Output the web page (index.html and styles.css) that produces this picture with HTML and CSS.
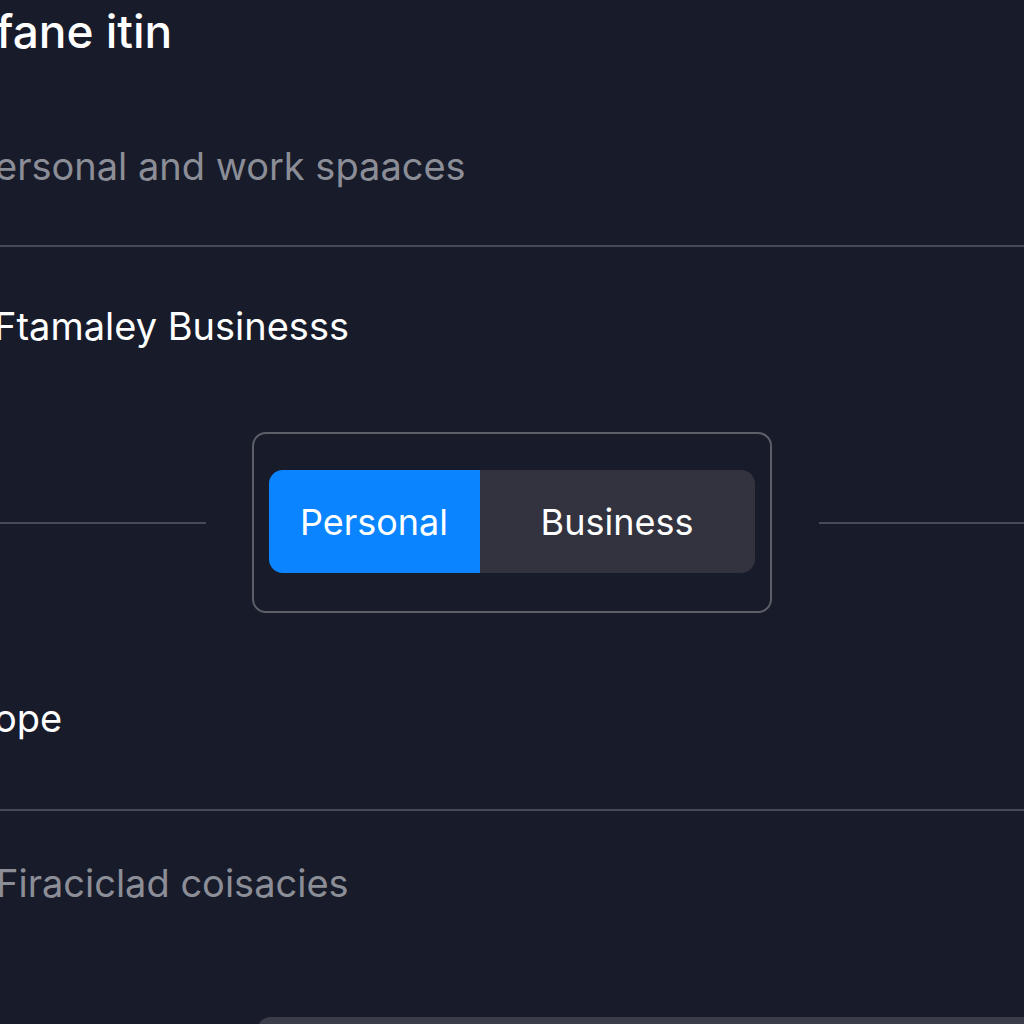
FILE: index.html
```html
<!DOCTYPE html>
<html lang="en">
<head>
    <meta charset="UTF-8">
    <meta name="viewport" content="width=device-width, initial-scale=1.0">
    <title>Spaces</title>
    <link rel="stylesheet" href="styles.css">
</head>
<body>
<div class="screen">
    <h1 class="title">fane itin</h1>
    <p class="subtitle">ersonal and work spaaces</p>

    <hr class="divider">

    <h2 class="row-label first">Ftamaley Businesss</h2>

    <!-- Space switcher -->
    <div class="switch-row">
        <span class="rule"></span>
        <div class="switch-box">
            <div class="segments">
                <button class="segment active">Personal</button>
                <button class="segment">Business</button>
            </div>
        </div>
        <span class="rule"></span>
    </div>

    <h2 class="row-label second">ope</h2>

    <hr class="divider lower">

    <p class="subtitle muted-bottom">Firaciclad coisacies</p>

    <div class="sheet"></div>
</div>
</body>
</html>
```

FILE: styles.css
```css
body {
    margin: 0;
    padding: 0;
    background: #171b2a;
    font-family: 'Inter', 'Noto Sans', sans-serif;
    color: #fff;
    overflow: hidden;
    height: 1024px;
}

.screen {
    display: flex;
    flex-direction: column;
    width: 1024px;
}

.title {
    margin: 8px 0 0 -4px;
    font-size: 46px;
    line-height: 46px;
    font-weight: 500;
}

.subtitle {
    margin: 93px 0 0 -5px;
    font-size: 38px;
    line-height: 38px;
    color: #8c8e97;
}

.divider {
    margin: 60px 0 0;
    border: none;
    height: 2px;
    background: #474b57;
}

.divider.lower {
    margin-top: 72px;
}

.row-label {
    margin: 60px 0 0 -6px;
    font-size: 38px;
    line-height: 38px;
    font-weight: 400;
}

.row-label.second {
    margin-top: 86px;
}

.muted-bottom {
    margin-top: 53px;
    margin-left: -4px;
}

.switch-row {
    display: flex;
    align-items: center;
    margin-top: 87px;
}

.rule {
    flex: 1;
    height: 2px;
    background: #474b57;
}

.switch-box {
    width: 486px;
    margin: 0 47px 0 46px;
    padding: 36px 15px 38px;
    border: 2px solid #5c5f68;
    border-radius: 14px;
}

.segments {
    display: flex;
    height: 103px;
    border-radius: 14px;
    overflow: hidden;
    background: #32333f;
}

.segment {
    border: none;
    background: transparent;
    color: #fff;
    font-family: inherit;
    font-size: 36px;
    padding: 0;
}

.segment:first-child {
    width: 211px;
}

.segment:last-child {
    flex: 1;
}

.segment.active {
    background: #0a84ff;
}

.sheet {
    margin: 115px -30px 0 257px;
    height: 40px;
    border-radius: 14px;
    background: #3a3c48;
}
```
